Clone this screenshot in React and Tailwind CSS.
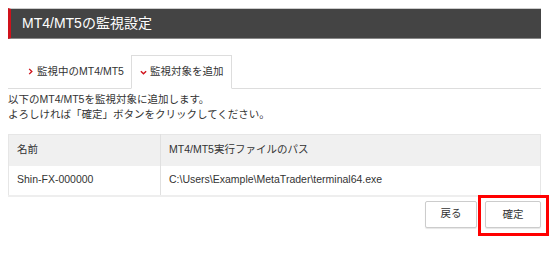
import React from "react";

const font = { fontFamily: '"Liberation Sans", "Noto Sans CJK JP", sans-serif' };

const Chevron = ({ down }) => (
  <svg width="7" height="7" viewBox="0 0 8 8" className="mr-[3px]">
    {down ? (
      <path d="M1 2.5 L4 5.5 L7 2.5" fill="none" stroke="#d0121b" strokeWidth="1.6" />
    ) : (
      <path d="M2.5 1 L5.5 4 L2.5 7" fill="none" stroke="#d0121b" strokeWidth="1.6" />
    )}
  </svg>
);

const App = () => {
  return (
    <div className="w-[550px] h-[260px] bg-white text-[#333] overflow-hidden" style={font}>
      <div className="pt-[8px] pl-[8px] pr-[9px]">
        <div className="flex items-center h-[31px] bg-[#444] border-t border-t-[#ccc] border-b border-b-[#888] border-l-[3px] border-l-[#d0121b]">
          <h1 className="text-white text-[14px] pl-[11px]">MT4/MT5の監視設定</h1>
        </div>

        <div className="mt-[16px] flex items-end border-b border-[#ddd] h-[34px]">
          <div className="flex items-center h-[33px] pl-[19px] pr-[7px] text-[10.5px] text-[#333]">
            <Chevron />
            監視中のMT4/MT5
          </div>
          <div className="flex items-center h-[34px] -mb-px px-[8px] bg-white border border-[#ddd] border-b-white text-[10.5px] text-[#333]">
            <Chevron down />
            監視対象を追加
          </div>
        </div>

        <div className="mt-[3px] text-[10.5px] leading-[15px] text-[#333]">
          <p>以下のMT4/MT5を監視対象に追加します。</p>
          <p>よろしければ「確定」ボタンをクリックしてください。</p>
        </div>

        <table className="mt-[12px] w-full border border-[#e6e6e6] border-collapse text-[10.5px] text-[#333]">
          <thead>
            <tr className="bg-[#f0f0f0]">
              <th className="h-[31px] w-[152px] text-left font-normal pl-[8px] border-r border-[#e0e0e0]">名前</th>
              <th className="h-[31px] text-left font-normal pl-[8px]">MT4/MT5実行ファイルのパス</th>
            </tr>
          </thead>
          <tbody>
            <tr className="border-b-2 border-[#eee]">
              <td className="h-[30px] pl-[8px] border-r border-[#e0e0e0]">Shin-FX-000000</td>
              <td className="h-[30px] pl-[8px]">C:\Users\Example\MetaTrader\terminal64.exe</td>
            </tr>
          </tbody>
        </table>

        <div className="mt-[4px] flex justify-end gap-[8px]">
          <button className="w-[52px] h-[27px] bg-white border border-[#ccc] rounded-[2px] shadow-[0_1px_1px_rgba(0,0,0,0.1)] text-[10.5px] text-[#333]">
            戻る
          </button>
          <div className="relative">
            <button className="w-[56px] h-[27px] bg-white border border-[#ccc] rounded-[2px] shadow-[0_1px_1px_rgba(0,0,0,0.1)] text-[10.5px] text-[#333]">
              確定
            </button>
            <div className="absolute left-[-7px] top-[-6px] w-[71px] h-[41px] border-[3px] border-[#f00] pointer-events-none" />
          </div>
        </div>
      </div>
    </div>
  );
};

export default App;
